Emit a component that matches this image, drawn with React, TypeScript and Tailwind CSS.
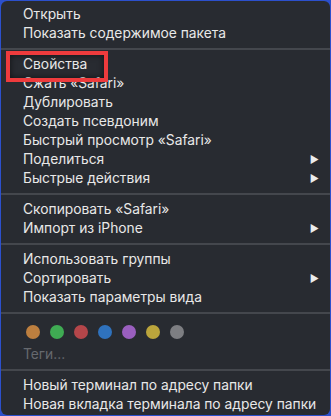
import React from "react";

type Item = { label: string; sub?: boolean };

const groups: Item[][] = [
  [{ label: "Открыть" }, { label: "Показать содержимое пакета" }],
  [
    { label: "Свойства" },
    { label: "Сжать «Safari»" },
    { label: "Дублировать" },
    { label: "Создать псевдоним" },
    { label: "Быстрый просмотр «Safari»" },
    { label: "Поделиться", sub: true },
    { label: "Быстрые действия", sub: true },
  ],
  [{ label: "Скопировать «Safari»" }, { label: "Импорт из iPhone", sub: true }],
  [
    { label: "Использовать группы" },
    { label: "Сортировать", sub: true },
    { label: "Показать параметры вида" },
  ],
];

const tags = ["#bd7f3f", "#3fab53", "#b4464a", "#2f72bd", "#9a5fbf", "#bba53c", "#7d7e82"];

const Separator = () => (
  <div className="h-[12px] flex items-center">
    <div className="h-[2px] w-full bg-[#44474d]" />
  </div>
);

const Row = ({ item }: { item: Item }) => (
  <div className="h-[19px] flex items-center justify-between pl-[22px] pr-[11px]">
    <span>{item.label}</span>
    {item.sub && <span className="text-[10px] text-[#ececec]">▶</span>}
  </div>
);

export default function App() {
  return (
    <div className="w-[331px] h-[416px] bg-[#2c50cc] p-[1px]">
      <div
        className="relative h-full rounded-[6px] bg-[#282b31] pt-[4px] text-[13.8px] text-[#e8e8e8] overflow-hidden"
        style={{ fontFamily: 'Inter, "Liberation Sans", Arial, sans-serif' }}
      >
        {groups.map((g, i) => (
          <React.Fragment key={i}>
            {i > 0 && <Separator />}
            {g.map((item) => (
              <Row key={item.label} item={item} />
            ))}
          </React.Fragment>
        ))}
        <Separator />
        <div className="h-[26px] flex items-center gap-[10px] pl-[25px]">
          {tags.map((c) => (
            <span key={c} className="w-[14px] h-[14px] rounded-full" style={{ backgroundColor: c }} />
          ))}
        </div>
        <div className="h-[19px] flex items-center pl-[22px] text-[#66696e]">Теги...</div>
        <Separator />
        <Row item={{ label: "Новый терминал по адресу папки" }} />
        <Row item={{ label: "Новая вкладка терминала по адресу папки" }} />

        <div className="absolute left-[5px] top-[50px] w-[102px] h-[31px] border-[4px] border-[#ee3b3d] shadow-[inset_0_0_6px_rgba(0,0,0,0.6)]" />
      </div>
    </div>
  );
}
